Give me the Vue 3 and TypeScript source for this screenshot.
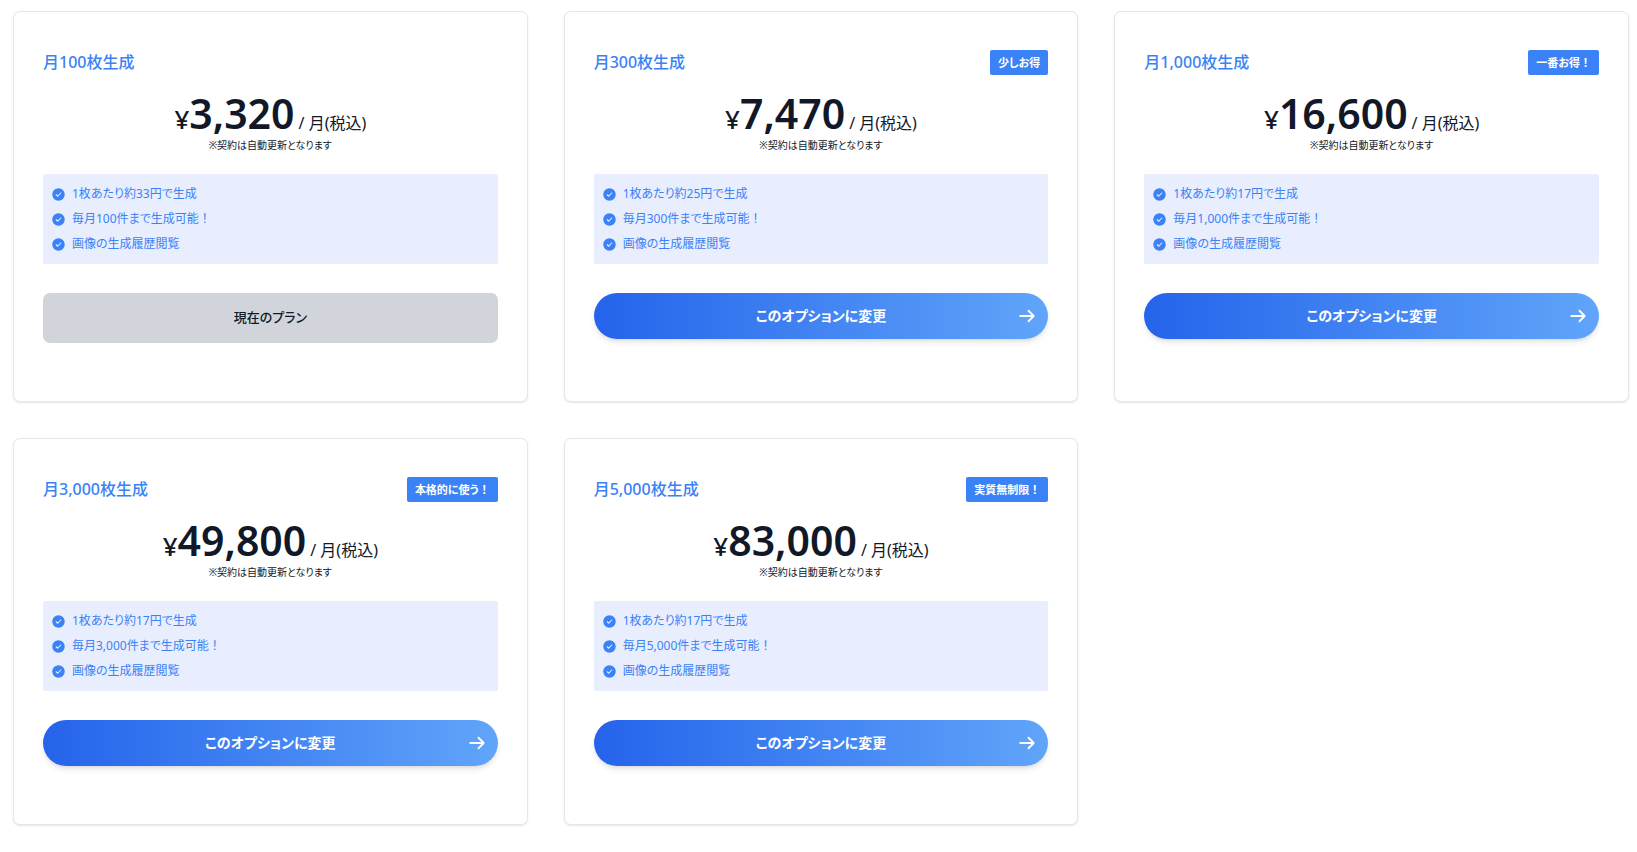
<script setup lang="ts">
interface Plan {
  count: string
  badge?: string
  price: string
  perImage: number
  current?: boolean
}

const plans: Plan[] = [
  { count: '100', price: '3,320', perImage: 33, current: true },
  { count: '300', badge: '少しお得', price: '7,470', perImage: 25 },
  { count: '1,000', badge: '一番お得！', price: '16,600', perImage: 17 },
  { count: '3,000', badge: '本格的に使う！', price: '49,800', perImage: 17 },
  { count: '5,000', badge: '実質無制限！', price: '83,000', perImage: 17 },
]

const features = (plan: Plan): string[] => [
  `1枚あたり約${plan.perImage}円で生成`,
  `毎月${plan.count}件まで生成可能！`,
  '画像の生成履歴閲覧',
]

// Splits off full-width exclamation marks, which keep their full advance width.
const segments = (text: string): string[] => text.split(/(！)/).filter(Boolean)
</script>

<template>
  <main class="plans">
    <article v-for="plan in plans" :key="plan.count" class="card">
      <header class="card-head">
        <h2 class="title">月{{ plan.count }}枚生成</h2>
        <span v-if="plan.badge" class="badge"><span v-for="(part, i) in segments(plan.badge)" :key="i" :class="{ full: part === '！' }">{{ part }}</span></span>
      </header>
      <p class="price">
        <span class="yen">¥</span><span class="amount">{{ plan.price }}</span><span class="unit">/ 月(税込)</span>
      </p>
      <p class="note">※契約は自動更新となります</p>
      <ul class="features">
        <li v-for="feature in features(plan)" :key="feature">
          <svg class="check" viewBox="0 0 26 26" aria-hidden="true">
            <circle cx="13" cy="13" r="12.5" fill="#3b82f6" />
            <path d="M8.5 13.5l3 3 6-6.5" fill="none" stroke="#e8eefd" stroke-width="2.2" stroke-linecap="round" stroke-linejoin="round" />
          </svg>
          <span><span v-for="(part, i) in segments(feature)" :key="i" :class="{ full: part === '！' }">{{ part }}</span></span>
        </li>
      </ul>
      <button v-if="plan.current" type="button" class="current">現在のプラン</button>
      <button v-else type="button" class="change">
        <span class="label">このオプションに変更</span>
        <svg class="arrow" viewBox="0 0 24 24" fill="none" stroke="currentColor" stroke-width="2.4" stroke-linecap="round" stroke-linejoin="round" aria-hidden="true">
          <path d="M14 5l7 7m0 0l-7 7m7-7H3" />
        </svg>
      </button>
    </article>
  </main>
</template>

<style>
body {
  margin: 0;
  background: #fff;
}
</style>

<style scoped>
.plans {
  display: grid;
  grid-template-columns: repeat(3, minmax(0, 1fr));
  gap: 36px;
  padding: 11px 8px 27px 13px;
  color: #111827;
  font-family: "Noto Sans", "Noto Sans CJK JP", sans-serif;
  font-feature-settings: "palt";
}

.full {
  font-feature-settings: normal;
}

.card {
  box-sizing: border-box;
  padding: 38px 29px 58px;
  border: 1px solid #e5e7eb;
  border-radius: 7px;
  background: #fff;
  box-shadow: 0 1px 2px rgba(0, 0, 0, 0.1);
}

.card-head {
  display: flex;
  align-items: flex-start;
  justify-content: space-between;
  height: 25px;
  margin-bottom: 17px;
}

.title {
  margin: 0;
  color: #3b82f6;
  font-size: 16px;
  font-weight: 500;
  line-height: 25px;
}

.badge {
  padding: 0 8px;
  border-radius: 2px;
  background: #3b82f6;
  color: #fff;
  font-size: 11px;
  font-weight: 700;
  line-height: 25px;
}

.price {
  display: flex;
  align-items: baseline;
  justify-content: center;
  height: 43px;
  margin: 0;
  line-height: 43px;
}

.yen {
  font-size: 26px;
  font-weight: 500;
}

.amount {
  font-size: 41px;
  font-weight: 600;
}

.unit {
  margin-left: 4px;
  font-size: 16px;
  font-weight: 400;
}

.note {
  margin: 0 0 18px;
  font-size: 10px;
  line-height: 21px;
  text-align: center;
}

.features {
  display: grid;
  gap: 5px;
  margin: 0 0 29px;
  padding: 10px 9px;
  border-radius: 2px;
  background: #e8eefd;
  color: #3b82f6;
  font-size: 12px;
  line-height: 20px;
  list-style: none;
}

.features li {
  display: flex;
  align-items: center;
  gap: 7px;
  height: 20px;
}

.check {
  width: 13px;
  height: 13px;
}

button {
  width: 100%;
  border: 0;
  font-family: inherit;
  font-feature-settings: inherit;
  cursor: pointer;
}

.current {
  height: 50px;
  padding: 0 0 3px;
  border-radius: 7px;
  background: #d1d5db;
  color: #111827;
  font-size: 13px;
  font-weight: 500;
}

.change {
  display: grid;
  grid-template-columns: 1fr auto 1fr;
  align-items: center;
  height: 46px;
  padding: 0 12px;
  border-radius: 23px;
  background: linear-gradient(to right, #2563eb, #60a5fa);
  box-shadow: 0 4px 6px -1px rgba(0, 0, 0, 0.1), 0 2px 4px -2px rgba(0, 0, 0, 0.1);
  color: #fff;
  font-size: 14px;
  font-weight: 700;
}

.label {
  grid-column: 2;
  padding-bottom: 2px;
}

.arrow {
  justify-self: end;
  width: 18px;
  height: 18px;
}
</style>
